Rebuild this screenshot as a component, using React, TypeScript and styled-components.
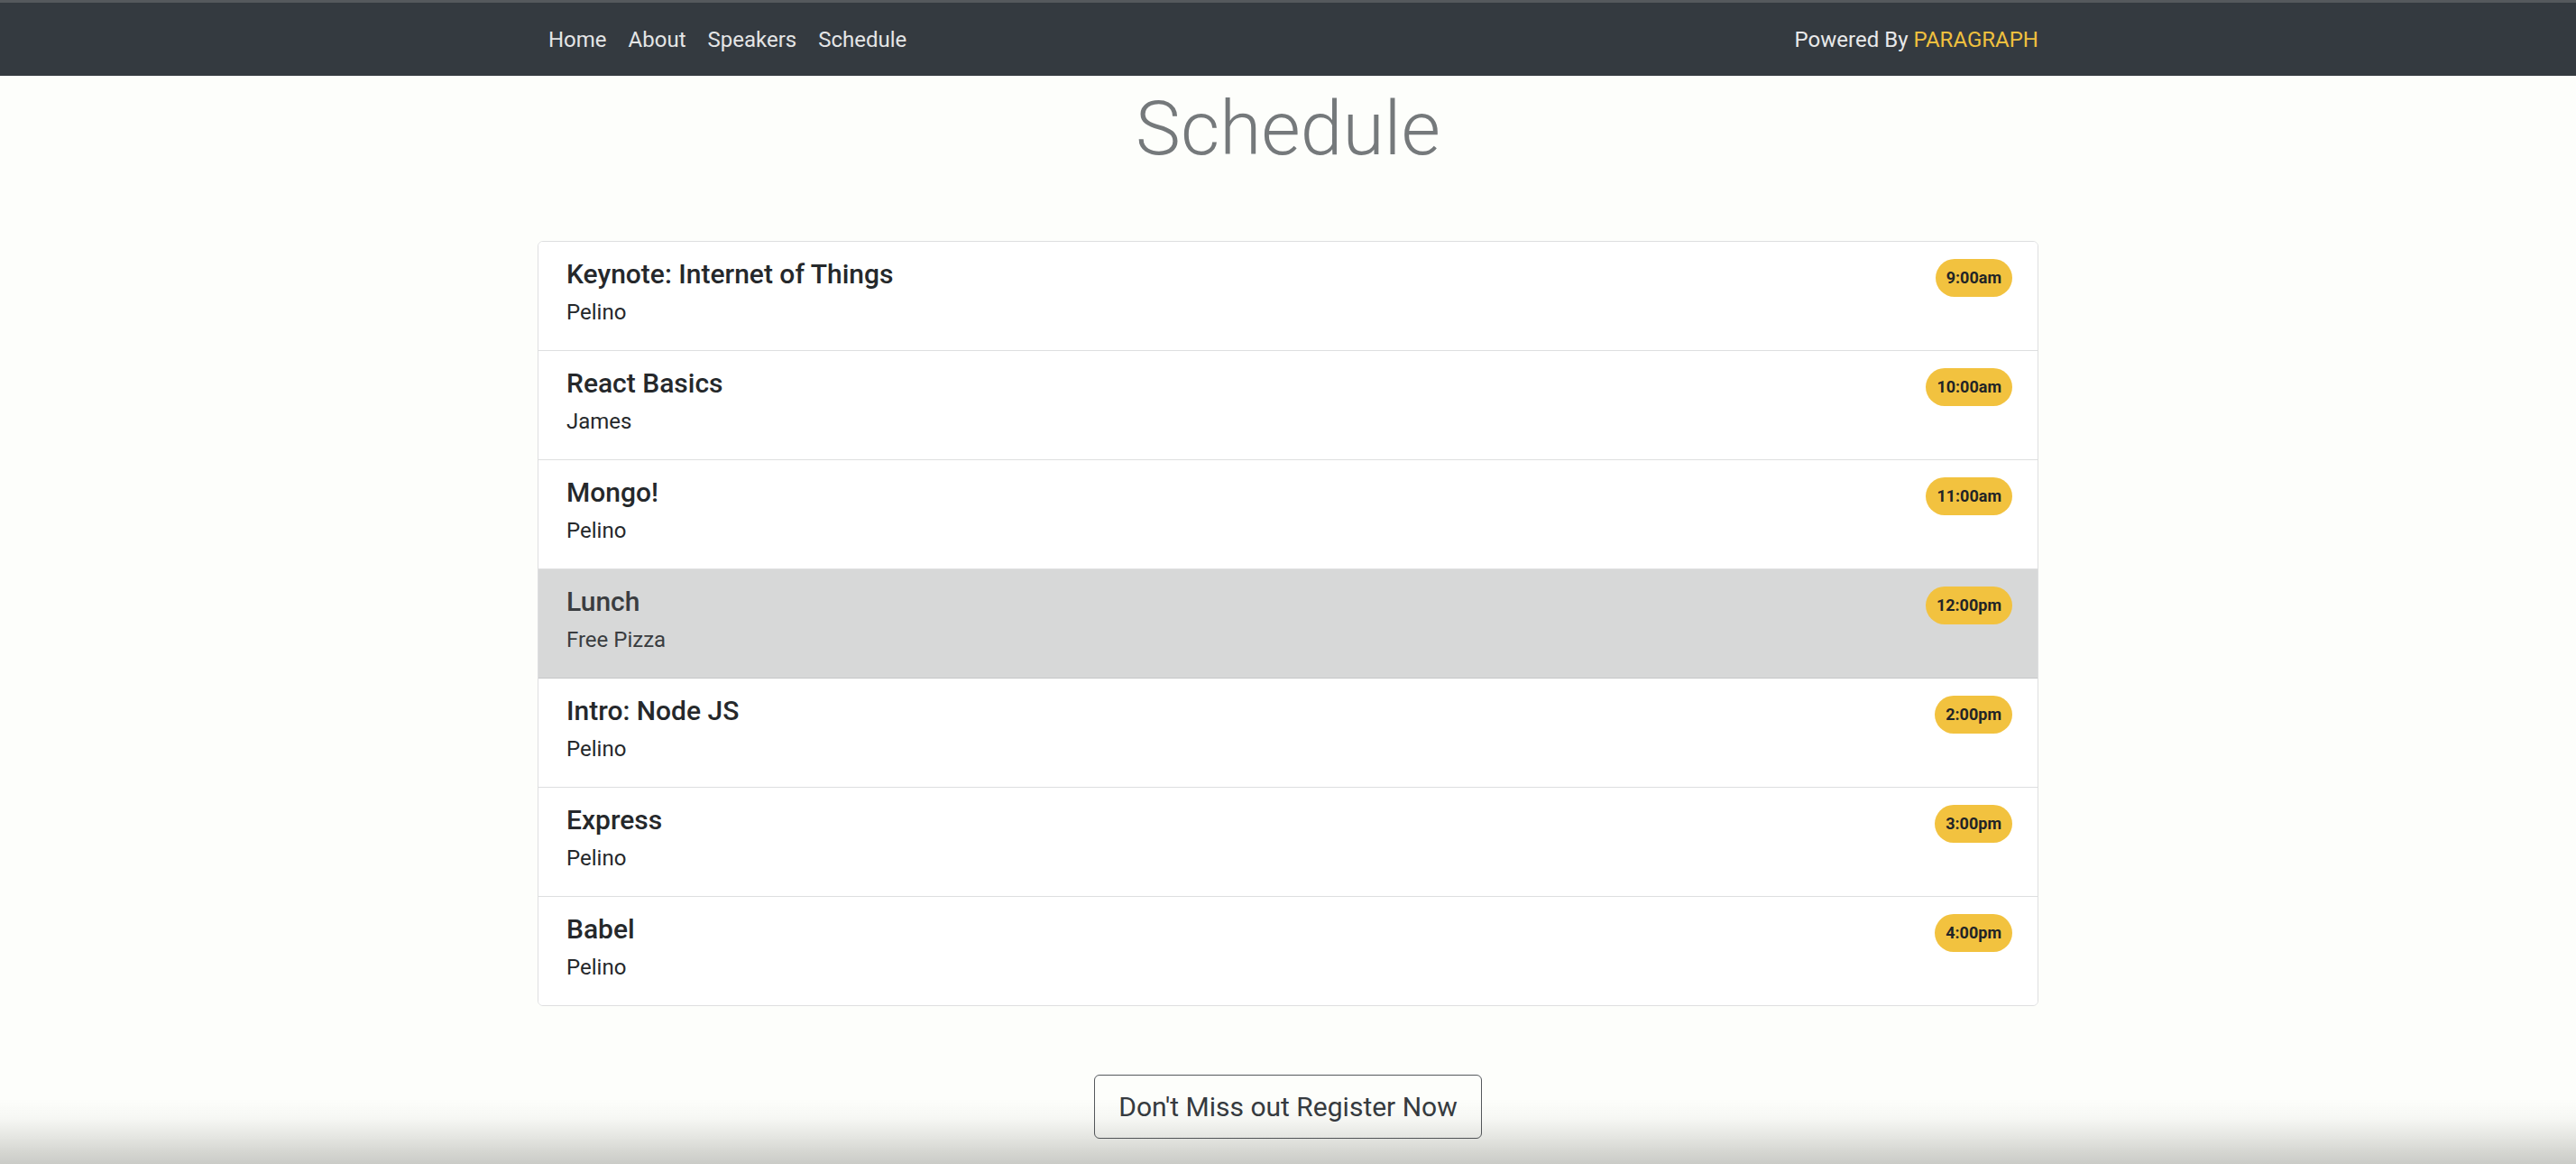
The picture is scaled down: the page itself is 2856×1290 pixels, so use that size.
import React from "react";
import styled, { createGlobalStyle } from "styled-components";

const GlobalStyle = createGlobalStyle`
  html, body {
    margin: 0;
    padding: 0;
    background: #fdfefb;
    font-family: Roboto, "Liberation Sans", Arial, sans-serif;
    color: #212529;
  }
  * { box-sizing: border-box; }
`;

const Page = styled.div`
  min-height: 1290px;
  display: flex;
  flex-direction: column;
  align-items: center;
`;

const NavBar = styled.nav`
  width: 100%;
  height: 84px;
  background: #343a40;
  border-top: 3px solid #55595d;
  display: flex;
  justify-content: center;
`;

const Container = styled.div`
  width: 1664px;
  display: flex;
  align-items: center;
  justify-content: space-between;
`;

const NavLinks = styled.ul`
  list-style: none;
  margin: 0;
  padding: 0;
  display: flex;
`;

const NavLink = styled.li`
  padding: 0 12px;
  font-size: 24px;
  line-height: 36px;
  color: #e4e5e6;
`;

const PoweredBy = styled.span`
  font-size: 24px;
  line-height: 36px;
  color: #e8e9ea;
`;

const Brand = styled.span`
  color: #f0c03e;
`;

const Title = styled.h1`
  margin: 9px 0 0;
  font-size: 84px;
  font-weight: 300;
  line-height: 1.2;
  color: #75797b;
`;

const Card = styled.ul`
  list-style: none;
  margin: 73px 0 0;
  padding: 0;
  width: 1664px;
  border: 1px solid #dedfe0;
  border-radius: 6px;
  overflow: hidden;
  background: #ffffff;
`;

const Row = styled.li<{ $muted?: boolean }>`
  display: flex;
  justify-content: space-between;
  align-items: flex-start;
  padding: 18px 28px 18px 31px;
  background: ${(p) => (p.$muted ? "#d7d8d8" : "#ffffff")};
  color: ${(p) => (p.$muted ? "#3a3d40" : "#25282b")};
  border-bottom: 1px solid ${(p) => (p.$muted ? "#c6c7c8" : "#dedfe0")};
  &:last-child {
    border-bottom: none;
  }
`;

const Info = styled.div`
  display: flex;
  flex-direction: column;
`;

const SessionTitle = styled.h5`
  margin: 0 0 6px;
  font-size: 30px;
  font-weight: 500;
  line-height: 36px;
`;

const Speaker = styled.p`
  margin: 0 0 6px;
  font-size: 24px;
  line-height: 36px;
`;

const Badge = styled.span`
  margin-top: 1px;
  padding: 12px 12px;
  border-radius: 999px;
  background: #f2c23f;
  color: #222426;
  font-size: 18px;
  font-weight: 700;
  line-height: 18px;
`;

const RegisterButton = styled.button`
  margin-top: 76px;
  padding: 12px 26px;
  font-family: Roboto, "Liberation Sans", Arial, sans-serif;
  font-size: 30px;
  line-height: 45px;
  color: #363b40;
  background: transparent;
  border: 1px solid #55595d;
  border-radius: 6px;
`;

const BottomShade = styled.div`
  position: fixed;
  left: 0;
  right: 0;
  bottom: 0;
  height: 72px;
  pointer-events: none;
  background: linear-gradient(
    to bottom,
    rgba(40, 40, 30, 0) 0%,
    rgba(40, 40, 30, 0.03) 30%,
    rgba(40, 40, 30, 0.1) 55%,
    rgba(40, 40, 30, 0.18) 80%,
    rgba(40, 40, 30, 0.24) 100%
  );
`;

const sessions = [
  { title: "Keynote: Internet of Things", who: "Pelino", time: "9:00am" },
  { title: "React Basics", who: "James", time: "10:00am" },
  { title: "Mongo!", who: "Pelino", time: "11:00am" },
  { title: "Lunch", who: "Free Pizza", time: "12:00pm", muted: true },
  { title: "Intro: Node JS", who: "Pelino", time: "2:00pm" },
  { title: "Express", who: "Pelino", time: "3:00pm" },
  { title: "Babel", who: "Pelino", time: "4:00pm" },
];

export default function App() {
  return (
    <>
      <GlobalStyle />
      <Page>
        <NavBar>
          <Container>
            <NavLinks>
              <NavLink>Home</NavLink>
              <NavLink>About</NavLink>
              <NavLink>Speakers</NavLink>
              <NavLink>Schedule</NavLink>
            </NavLinks>
            <PoweredBy>
              Powered By <Brand>PARAGRAPH</Brand>
            </PoweredBy>
          </Container>
        </NavBar>
        <Title>Schedule</Title>
        <Card>
          {sessions.map((s) => (
            <Row key={s.title} $muted={s.muted}>
              <Info>
                <SessionTitle>{s.title}</SessionTitle>
                <Speaker>{s.who}</Speaker>
              </Info>
              <Badge>{s.time}</Badge>
            </Row>
          ))}
        </Card>
        <RegisterButton>Don't Miss out Register Now</RegisterButton>
        <BottomShade />
      </Page>
    </>
  );
}
